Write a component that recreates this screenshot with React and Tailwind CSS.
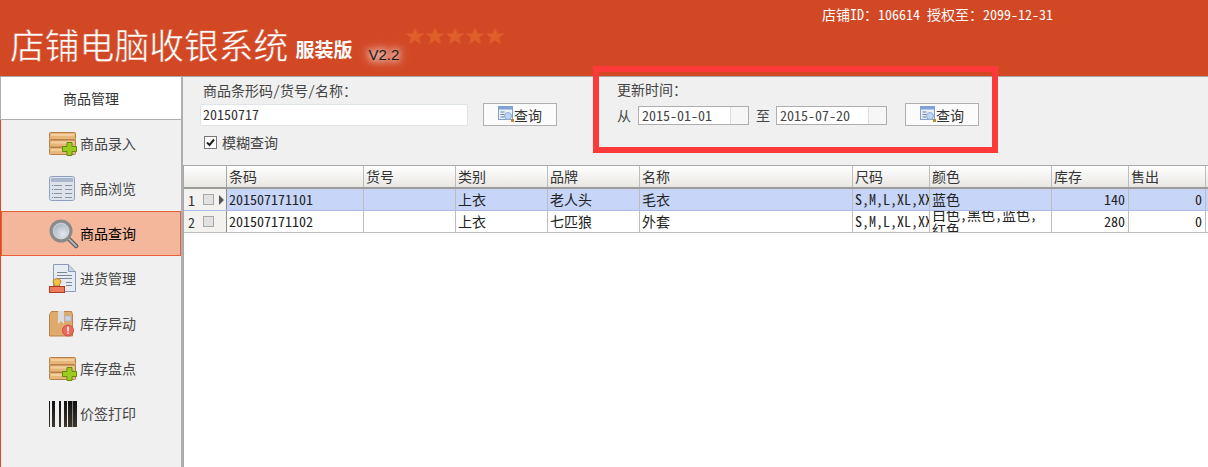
import React from "react";

const cjk = "font-['Noto_Sans_Mono_CJK_SC','Noto_Sans_CJK_SC','Noto_Sans',sans-serif]";

function DrawerPlus() {
  return (
    <svg width="28" height="24" viewBox="0 0 28 24">
      <rect x="0.5" y="0.5" width="26" height="7" rx="1" fill="#e8b678" stroke="#b5804a" />
      <rect x="0.5" y="8" width="26" height="7" fill="#e8b678" stroke="#b5804a" />
      <rect x="0.5" y="15.5" width="26" height="7" rx="1" fill="#e8b678" stroke="#b5804a" />
      <rect x="2" y="2" width="23" height="2" fill="#f3cf9f" />
      <rect x="2" y="9.5" width="23" height="2" fill="#f3cf9f" />
      <rect x="2" y="17" width="23" height="2" fill="#f3cf9f" />
      <path d="M18 10.5h5v4h4.5v5H23v4h-5v-4h-4.5v-5H18z" fill="#9ccb1f" stroke="#5f8a0c" />
    </svg>
  );
}
function ListIcon() {
  return (
    <svg width="26" height="26" viewBox="0 0 26 26">
      <rect x="0.5" y="0.5" width="25" height="24" rx="2" fill="#dde3ec" stroke="#8f9fc0" />
      <rect x="2" y="2" width="22" height="4" fill="#aab6cc" />
      <g fill="#8b93a3">
        <rect x="5" y="9" width="8" height="1" /><rect x="16" y="9" width="7" height="1" />
        <rect x="5" y="13" width="8" height="1" /><rect x="16" y="13" width="7" height="1" />
        <rect x="5" y="17" width="8" height="1" /><rect x="16" y="17" width="7" height="1" />
        <rect x="5" y="21" width="8" height="1" /><rect x="16" y="21" width="7" height="1" />
      </g>
      <g fill="#3d86d8">
        <rect x="3" y="9" width="1" height="1" /><rect x="3" y="13" width="1" height="1" />
        <rect x="3" y="17" width="1" height="1" /><rect x="3" y="21" width="1" height="1" />
      </g>
    </svg>
  );
}
function Magnifier() {
  return (
    <svg width="30" height="30" viewBox="0 0 30 30">
      <defs>
        <radialGradient id="lens" cx="0.6" cy="0.65" r="0.7">
          <stop offset="0" stopColor="#e4e8ee" />
          <stop offset="1" stopColor="#9aa6b6" />
        </radialGradient>
      </defs>
      <path d="M19 19l8 8" stroke="#5c5c5c" strokeWidth="4.5" strokeLinecap="round" />
      <path d="M19 19l8 8" stroke="#b5b5b5" strokeWidth="2" strokeLinecap="round" />
      <circle cx="12" cy="12" r="10" fill="url(#lens)" stroke="#8a8a8a" strokeWidth="3" />
      <circle cx="12" cy="12" r="7.5" fill="none" stroke="#d5d8dc" strokeWidth="0.8" />
    </svg>
  );
}
function DocStamp() {
  return (
    <svg width="28" height="30" viewBox="0 0 28 30">
      <path d="M4.5 0.5h15l7 7v20h-22z" fill="#e7ebf2" stroke="#8c9ab8" />
      <path d="M19.5 0.5v7h7" fill="#c9d2e2" stroke="#8c9ab8" />
      <g fill="#7f8797">
        <rect x="8" y="8" width="10" height="1" /><rect x="8" y="11" width="15" height="1" />
        <rect x="8" y="14" width="15" height="1" /><rect x="17" y="18" width="6" height="1" /><rect x="17" y="21" width="6" height="1" />
      </g>
      <path d="M4 17a4.500 4.500 0 0 1 8 0c0 2-2 3-1.500 5h-5c.5-2-1.500-3-1.500-5z" fill="#f0c24a" stroke="#b9832a" />
      <rect x="0.500" y="22.500" width="15" height="6" fill="#ee7b5c" stroke="#b23a22" />
    </svg>
  );
}
function Parcel() {
  return (
    <svg width="26" height="28" viewBox="0 0 26 28">
      <path d="M2.500 1.500h20l1 3v21.500h-23v-21.500z" fill="#deaa6e" stroke="#b98246" />
      <path d="M9 1h6v13l-3-3-3 3z" fill="#dcdde0" />
      <rect x="16" y="6" width="6" height="5" fill="#c8d2e2" stroke="#9dabc2" strokeWidth="0.5" />
      <circle cx="19" cy="20.500" r="5.500" fill="#ea6a5e" stroke="#d64a3d" />
      <rect x="18.300" y="16.500" width="1.500" height="5" fill="#fff" />
      <rect x="18.300" y="22.500" width="1.500" height="1.500" fill="#fff" />
    </svg>
  );
}
function Barcode() {
  return (
    <svg width="28" height="26" viewBox="0 0 28 26">
      <defs>
        <linearGradient id="bar" x1="0" y1="0" x2="0" y2="1">
          <stop offset="0" stopColor="#111" />
          <stop offset="1" stopColor="#3d372c" />
        </linearGradient>
      </defs>
      <g fill="url(#bar)">
        <rect x="0" y="0" width="1" height="26" />
        <rect x="3" y="0" width="3" height="26" />
        <rect x="10" y="0" width="2" height="26" />
        <rect x="15" y="0" width="3" height="26" />
        <rect x="19" y="0" width="4" height="26" />
        <rect x="23.500" y="0" width="4.500" height="26" />
      </g>
    </svg>
  );
}
function QueryIcon() {
  return (
    <svg width="16" height="17" viewBox="0 0 16 17" className="shrink-0">
      <rect x="0.500" y="0.500" width="14" height="13" fill="#eaf0f8" stroke="#7f9fcf" />
      <rect x="1" y="1" width="13" height="2.500" fill="#7fa2d8" />
      <rect x="2.500" y="5.500" width="4" height="1" fill="#6b7d96" />
      <rect x="2.500" y="8" width="4" height="1" fill="#6b7d96" />
      <rect x="2.500" y="10.500" width="4" height="1" fill="#6b7d96" />
      <circle cx="10" cy="10" r="3.500" fill="#bcd6f2" stroke="#8eb0d8" />
      <rect x="13" y="13" width="3" height="3" fill="#c08a3e" />
    </svg>
  );
}
function Star() {
  return (
    <svg width="20" height="18" viewBox="0 0 20 18">
      <path d="M10 0.500l2.700 6h6.600l-5.200 4.100 2 6.700L10 13.500l-6.100 3.800 2-6.700L.7 6.500h6.600z" fill="#df5e2a" stroke="#d9552a" strokeWidth="0.6" />
    </svg>
  );
}

function QueryButton() {
  return (
    <button className="flex h-[23px] w-[74px] items-center justify-center border border-[#b0b0b0] bg-[#fbfbfb] text-[14px] leading-none text-[#333]">
      <QueryIcon />查询
    </button>
  );
}

function DateField({ value }) {
  return (
    <div className="flex h-[19px] w-[111px] border border-[#aeaeae] bg-white">
      <div className="flex-1 pl-[3px] text-[14px] leading-[16px] text-[#444]">{value}</div>
      <div className="w-[18px] border-l border-[#dedede] bg-[#f6f6f6]" />
    </div>
  );
}

const navItems = [
  ["商品录入", <DrawerPlus />],
  ["商品浏览", <ListIcon />],
  ["商品查询", <Magnifier />, true],
  ["进货管理", <DocStamp />],
  ["库存异动", <Parcel />],
  ["库存盘点", <DrawerPlus />],
  ["价签打印", <Barcode />],
];

const cols = ["w-[137px]", "w-[92px]", "w-[92px]", "w-[92px]", "w-[213px]", "w-[77px]", "w-[122px]", "w-[77px]", "w-[77px]"];
const heads = ["条码", "货号", "类别", "品牌", "名称", "尺码", "颜色", "库存", "售出"];

function Row({ n, sel, values }) {
  return (
    <div className={`flex h-[22px] border-b ${sel ? "border-[#a9bce6] bg-[#c6d5f8]" : "border-[#bdbdbd] bg-white"}`}>
      <div className="flex w-[43px] shrink-0 items-center border-r border-[#8c8c8c] bg-[#f4f2ee] pl-[4px]">
        <span className="w-[12px] text-[14px] leading-none text-[#333]">{n}</span>
        <span className="ml-[3px] h-[11px] w-[11px] border border-[#a8a8a8] bg-[#e2e2e2]" />
        {sel && <span className="ml-[5px] h-0 w-0 border-y-[5px] border-l-[5px] border-y-transparent border-l-[#555]" />}
      </div>
      {values.map((v, i) => {
        const right = i === 7 || i === 8;
        return (
          <div
            key={i}
            className={`${cols[i]} flex shrink-0 items-center overflow-hidden border-r border-[#bdbdbd] ${right ? "justify-end pr-[3px]" : "pl-[2px]"}`}
          >
            <span className={`text-[14px] leading-[15px] text-[#222] ${i === 5 ? "whitespace-nowrap" : ""}`}>{v}</span>
          </div>
        );
      })}
    </div>
  );
}

export default function App() {
  return (
    <div className={`relative flex h-[467px] w-[1208px] flex-col overflow-hidden bg-[#f0f0f0] ${cjk}`}>
      <header className="h-[76px] shrink-0 bg-[#d24825] text-white">
        <div className="flex h-[24px] items-start justify-end pr-[155px] pt-[4px] text-[14px] leading-[20px]">
          店铺ID：106614 授权至：2099-12-31
        </div>
        <div className="flex items-start pl-[10px]">
          <span className="-mt-[1px] text-[34.800px] leading-[42px] [-webkit-text-stroke:0.5px_#d24825]">店铺电脑收银系统</span>
          <span className="ml-[7px] mt-[12px] text-[19px] font-bold leading-[26px]">服装版</span>
          <span className="ml-[16px] mt-[22px] font-['Liberation_Sans',sans-serif] text-[15px] leading-[17px] text-[#1a1a1a] [text-shadow:0_0_6px_#fff,0_0_10px_#fff,0_0_14px_#fff]">V2.2</span>
          <span className="ml-[6px] mt-[3px] flex">
            <Star /><Star /><Star /><Star /><Star />
          </span>
        </div>
      </header>

      <div className="flex min-h-0 flex-1 border-t border-[#a8a8a8]">
        <aside className="flex w-[183px] shrink-0 flex-col border-r-2 border-r-[#aeaeae]">
          <div className="flex h-[43px] shrink-0 items-center justify-center border-b border-l border-[#aeaeae] bg-white text-[14px] text-[#333]">商品管理</div>
          <nav className="flex-1 border-l border-l-[#dd4a2a] pt-[1px]">
            {navItems.map(([label, icon, active]) => (
              <div
                key={label}
                className={`flex h-[45px] items-center text-[14px] ${active ? "border border-[#e8603a] bg-[#f5b79c] pl-[47px] text-black" : "pl-[48px] text-[#444]"}`}
              >
                <span className="flex w-[31px] shrink-0 items-center">{icon}</span>
                {label}
              </div>
            ))}
          </nav>
        </aside>

        <main className="flex min-w-0 flex-1 flex-col">
          <section className="flex h-[88px] shrink-0 text-[14px] text-[#444]">
            <div className="ml-[17px] w-[374px] pt-[3px]">
              <div className="ml-[3px] leading-[20px]">商品条形码/货号/名称：</div>
              <div className="mt-[4px] flex items-center">
                <div className="h-[22px] w-[268px] rounded-[2px] border border-[#dfe3ea] bg-white pl-[2px] leading-[19px] text-[#333]">20150717</div>
                <div className="ml-[15px] -mt-[1px]"><QueryButton /></div>
              </div>
              <label className="ml-[4px] mt-[6px] flex items-center gap-[5px]">
                <span className="flex h-[13px] w-[13px] items-center justify-center border border-[#777] bg-white">
                  <svg width="11" height="11" viewBox="0 0 11 11"><path d="M2 5.500l2.500 2.500 4.500-5.500" fill="none" stroke="#222" strokeWidth="2" /></svg>
                </span>
                模糊查询
              </label>
            </div>
            <div className="ml-[43px] pt-[2px]">
              <div className="leading-[20px]">更新时间：</div>
              <div className="mt-[5px] flex items-center">
                <span className="w-[21px]">从</span>
                <DateField value="2015-01-01" />
                <span className="ml-[7px] w-[20px]">至</span>
                <DateField value="2015-07-20" />
                <div className="ml-[18px] -mt-[1px]"><QueryButton /></div>
              </div>
            </div>
          </section>

          <section className="flex-1 border-l border-t border-[#a8a8a8] bg-white">
            <div className="flex h-[23px] border-b-2 border-[#9c9c9c] bg-gradient-to-b from-white to-[#e9e7e3]">
              <div className="w-[43px] shrink-0 border-r border-[#a8a8a8]" />
              {heads.map((h, i) => (
                <div key={h} className={`${cols[i]} shrink-0 border-r border-[#bdbdbd] pl-[2px] text-[14px] leading-[21px] text-[#333]`}>{h}</div>
              ))}
            </div>
            <Row n="1" sel values={["201507171101", "", "上衣", "老人头", "毛衣", "S,M,L,XL,XXL", "蓝色", "140", "0"]} />
            <Row n="2" values={["201507171102", "", "上衣", "七匹狼", "外套", "S,M,L,XL,XXL", <>白色,黑色,蓝色,<br />红色</>, "280", "0"]} />
          </section>
        </main>
      </div>

      <div className="pointer-events-none absolute left-[593px] top-[66px] h-[87px] w-[405px] border-[6px] border-[#fd3a3a]" />
    </div>
  );
}
